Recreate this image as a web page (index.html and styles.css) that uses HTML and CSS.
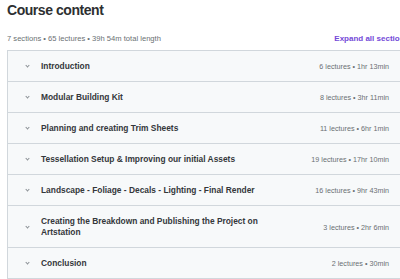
FILE: index.html
```html
<!doctype html>
<html lang="en">
  <head>
    <meta charset="utf-8" />
    <meta name="viewport" content="width=device-width" />
    <title>Course content</title>
    <link rel="stylesheet" href="styles.css">
  </head>
  <body>
    <section class="curriculum">
      <h2 class="curriculum-title">Course content</h2>
      <div class="curriculum-bar">
        <span class="curriculum-meta">7 sections • 65 lectures • 39h 54m total length</span>
        <button class="expand-all">Expand all sections</button>
      </div>
      <ul class="sections">
        <li class="section">
          <span class="chevron"></span>
          <span class="section-name">Introduction</span>
          <span class="section-info">6 lectures • 1hr 13min</span>
        </li>
        <li class="section">
          <span class="chevron"></span>
          <span class="section-name">Modular Building Kit</span>
          <span class="section-info">8 lectures • 3hr 11min</span>
        </li>
        <li class="section">
          <span class="chevron"></span>
          <span class="section-name">Planning and creating Trim Sheets</span>
          <span class="section-info">11 lectures • 6hr 1min</span>
        </li>
        <li class="section">
          <span class="chevron"></span>
          <span class="section-name">Tessellation Setup &amp; Improving our initial Assets</span>
          <span class="section-info">19 lectures • 17hr 10min</span>
        </li>
        <li class="section">
          <span class="chevron"></span>
          <span class="section-name">Landscape - Foliage - Decals - Lighting - Final Render</span>
          <span class="section-info">16 lectures • 9hr 43min</span>
        </li>
        <li class="section">
          <span class="chevron"></span>
          <span class="section-name">Creating the Breakdown and Publishing the Project on Artstation</span>
          <span class="section-info">3 lectures • 2hr 6min</span>
        </li>
        <li class="section">
          <span class="chevron"></span>
          <span class="section-name">Conclusion</span>
          <span class="section-info">2 lectures • 30min</span>
        </li>
      </ul>
    </section>
  </body>
</html>
```

FILE: styles.css
```css
body {
  margin: 0;
  background: #fff;
  font-family: "Liberation Sans", Arial, sans-serif;
  color: #2d2f31;
  overflow: hidden;
}

.curriculum {
  width: 402px;
  padding: 0 0 0 7px;
}

.curriculum-title {
  margin: 0;
  padding-top: 1px;
  font-size: 14px;
  line-height: 18px;
  font-weight: 700;
  letter-spacing: -0.45px;
}

.curriculum-bar {
  display: flex;
  justify-content: space-between;
  align-items: center;
  margin-top: 13px;
  height: 12px;
  margin-bottom: 6px;
}

.curriculum-meta {
  font-size: 7.6px;
  color: #6a6f73;
}

.expand-all {
  border: 0;
  background: none;
  padding: 0;
  font-family: inherit;
  font-size: 8px;
  font-weight: 700;
  color: #7449d8;
  white-space: nowrap;
}

.sections {
  list-style: none;
  margin: 0;
  padding: 0;
  border: 1px solid #d1d7dc;
}

.section {
  display: flex;
  align-items: center;
  gap: 11px;
  padding: 10px 19px 9px 17px;
  min-height: 11px;
  background: #f7f9fa;
  border-bottom: 1px solid #d1d7dc;
}

.section:last-child {
  border-bottom: 0;
}

.chevron {
  flex: none;
  width: 2px;
  height: 2px;
  margin: 0 1px 2px 1px;
  border-right: 1px solid #8c9196;
  border-bottom: 1px solid #8c9196;
  transform: rotate(45deg);
}

.section-name {
  flex: 1;
  max-width: 232px;
  font-size: 8.4px;
  line-height: 11px;
  font-weight: 700;
  color: #34373a;
}

.section-info {
  margin-left: auto;
  font-size: 7.2px;
  color: #6a6f73;
  white-space: nowrap;
}
```
